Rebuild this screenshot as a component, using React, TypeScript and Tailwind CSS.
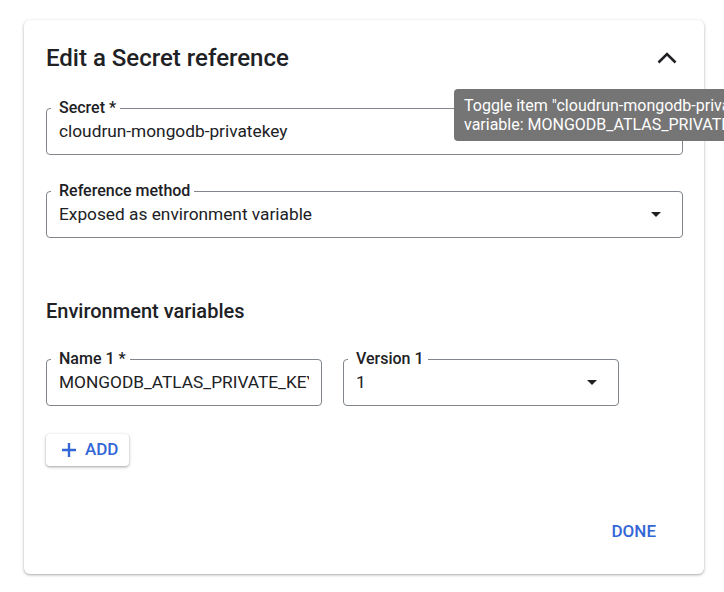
import React from "react";

type FieldProps = {
  label: string;
  value: string;
  select?: boolean;
  className?: string;
};

function OutlinedField({ label, value, select, className = "" }: FieldProps) {
  return (
    <fieldset
      className={`min-w-0 rounded border border-[#80868b] pl-3 pr-3 pt-[3px] pb-[11px] ${className}`}
    >
      <legend className="-ml-2 pl-2 pr-1 text-base font-medium leading-4 text-[#202124]">
        {label}
      </legend>
      <div className="flex items-center">
        <div className="min-w-0 flex-1 overflow-hidden whitespace-nowrap text-[17.3px] leading-6 text-[#202124]">
          {value}
        </div>
        {select && (
          <svg width="10" height="5" viewBox="0 0 10 5" className="mr-[9px] shrink-0">
            <polygon points="0,0 10,0 5,5" fill="#202124" />
          </svg>
        )}
      </div>
    </fieldset>
  );
}

export default function App() {
  return (
    <div className="relative h-[592px] w-[724px] overflow-hidden bg-white pt-5 font-['Roboto',sans-serif]">
      <div className="ml-6 w-[680px] rounded-md bg-white pl-[22px] pr-[21px] pt-6 pb-6 shadow-[0_1px_2px_rgba(60,64,67,0.3),0_1px_3px_1px_rgba(60,64,67,0.12)]">
        {/* Header */}
        <div className="flex h-7 items-center justify-between">
          <h2 className="text-2xl font-medium leading-7 text-[#202124]">
            Edit a Secret reference
          </h2>
          <button type="button" className="mr-1 h-6 w-6">
            <svg width="24" height="24" viewBox="0 0 24 24">
              <polyline
                points="3.5,16.5 12,8 20.5,16.5"
                fill="none"
                stroke="#202124"
                strokeWidth="2.6"
              />
            </svg>
          </button>
        </div>

        <OutlinedField
          className="mt-7"
          label="Secret *"
          value="cloudrun-mongodb-privatekey"
        />
        <OutlinedField
          className="mt-7"
          label="Reference method"
          value="Exposed as environment variable"
          select
        />

        <h3 className="mt-[59px] text-xl font-medium leading-7 text-[#202124]">
          Environment variables
        </h3>

        <div className="mt-[26px] flex gap-[21px]">
          <OutlinedField
            className="w-[276px] shrink-0"
            label="Name 1 *"
            value="MONGODB_ATLAS_PRIVATE_KEY"
          />
          <OutlinedField
            className="w-[276px] shrink-0"
            label="Version 1"
            value="1"
            select
          />
        </div>

        <button
          type="button"
          className="mt-7 flex h-8 items-center gap-[9px] rounded bg-white pl-4 pr-[11px] text-[17px] font-medium text-[#3367d6] shadow-[0_1px_2px_rgba(60,64,67,0.3),0_1px_3px_1px_rgba(60,64,67,0.15)]"
        >
          <svg width="14" height="14" viewBox="0 0 14 14">
            <path d="M7 0v14M0 7h14" stroke="#3367d6" strokeWidth="2.4" />
          </svg>
          ADD
        </button>

        <div className="mt-12 flex justify-end">
          <button
            type="button"
            className="mr-[19px] h-9 px-2 text-[17px] font-medium text-[#3367d6]"
          >
            DONE
          </button>
        </div>
      </div>

      {/* Tooltip */}
      <div className="absolute left-[454px] top-[89px] whitespace-nowrap rounded bg-[#757575] px-[10px] py-[7px] text-base leading-[19px] text-white">
        <div>Toggle item "cloudrun-mongodb-privatekey" exposed as environment</div>
        <div>variable: MONGODB_ATLAS_PRIVATE_KEY</div>
      </div>
    </div>
  );
}
